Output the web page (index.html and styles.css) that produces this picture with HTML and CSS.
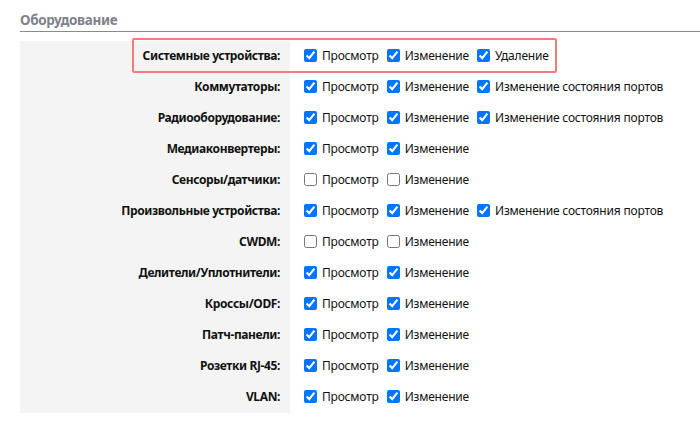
FILE: index.html
```html
<!DOCTYPE html>
<html lang="ru">
<head>
<meta charset="utf-8">
<link rel="stylesheet" href="styles.css">
</head>
<body>
<div class="section">
  <h3 class="section-title">Оборудование</h3>
  <div class="perm-table">
    <div class="highlight"></div>
    <div class="row"><div class="label">Системные устройства:</div><div class="opts"><label><input type="checkbox" checked> Просмотр</label><label><input type="checkbox" checked> Изменение</label><label><input type="checkbox" checked> Удаление</label></div></div>
    <div class="row"><div class="label">Коммутаторы:</div><div class="opts"><label><input type="checkbox" checked> Просмотр</label><label><input type="checkbox" checked> Изменение</label><label><input type="checkbox" checked> Изменение состояния портов</label></div></div>
    <div class="row"><div class="label">Радиооборудование:</div><div class="opts"><label><input type="checkbox" checked> Просмотр</label><label><input type="checkbox" checked> Изменение</label><label><input type="checkbox" checked> Изменение состояния портов</label></div></div>
    <div class="row"><div class="label">Медиаконвертеры:</div><div class="opts"><label><input type="checkbox" checked> Просмотр</label><label><input type="checkbox" checked> Изменение</label></div></div>
    <div class="row"><div class="label">Сенсоры/датчики:</div><div class="opts"><label><input type="checkbox"> Просмотр</label><label><input type="checkbox"> Изменение</label></div></div>
    <div class="row"><div class="label">Произвольные устройства:</div><div class="opts"><label><input type="checkbox" checked> Просмотр</label><label><input type="checkbox" checked> Изменение</label><label><input type="checkbox" checked> Изменение состояния портов</label></div></div>
    <div class="row"><div class="label">CWDM:</div><div class="opts"><label><input type="checkbox"> Просмотр</label><label><input type="checkbox"> Изменение</label></div></div>
    <div class="row"><div class="label">Делители/Уплотнители:</div><div class="opts"><label><input type="checkbox" checked> Просмотр</label><label><input type="checkbox" checked> Изменение</label></div></div>
    <div class="row"><div class="label">Кроссы/ODF:</div><div class="opts"><label><input type="checkbox" checked> Просмотр</label><label><input type="checkbox" checked> Изменение</label></div></div>
    <div class="row"><div class="label">Патч-панели:</div><div class="opts"><label><input type="checkbox" checked> Просмотр</label><label><input type="checkbox" checked> Изменение</label></div></div>
    <div class="row"><div class="label">Розетки RJ-45:</div><div class="opts"><label><input type="checkbox" checked> Просмотр</label><label><input type="checkbox" checked> Изменение</label></div></div>
    <div class="row"><div class="label">VLAN:</div><div class="opts"><label><input type="checkbox" checked> Просмотр</label><label><input type="checkbox" checked> Изменение</label></div></div>
  </div>
</div>
</body>
</html>
```
FILE: styles.css
```css
html, body {
  margin: 0;
  padding: 0;
  background: #fff;
}
body {
  font-family: "Noto Sans", "Open Sans", sans-serif;
  font-size: 12px;
  color: #111;
}
.section {
  padding: 11px 0 0 20px;
}
.section-title {
  margin: 0;
  font-size: 13.5px;
  font-weight: bold;
  letter-spacing: -0.35px;
  color: #7d838c;
  line-height: 19px;
  border-bottom: 1px solid #8a8a8a;
  padding-bottom: 1px;
}
.perm-table {
  position: relative;
  margin-top: 9px;
}
.row {
  display: grid;
  grid-template-columns: 270px 1fr;
  height: 31px;
}
.label {
  background: #f4f4f4;
  font-weight: bold;
  letter-spacing: -0.38px;
  text-align: right;
  padding: 6px 10px 0 0;
  line-height: 17px;
}
.opts {
  display: flex;
  align-items: flex-start;
  gap: 4px;
  padding: 6px 0 0 10px;
  line-height: 17px;
  letter-spacing: -0.2px;
}
.opts label {
  display: flex;
  align-items: center;
  white-space: nowrap;
}
.opts input {
  margin: 0 5px 0 4px;
  width: 13px;
  height: 13px;
}
.highlight {
  position: absolute;
  left: 112px;
  top: -3px;
  width: 421px;
  height: 31px;
  border: 2px solid #f67a7a;
  border-radius: 2px;
  pointer-events: none;
}
```
